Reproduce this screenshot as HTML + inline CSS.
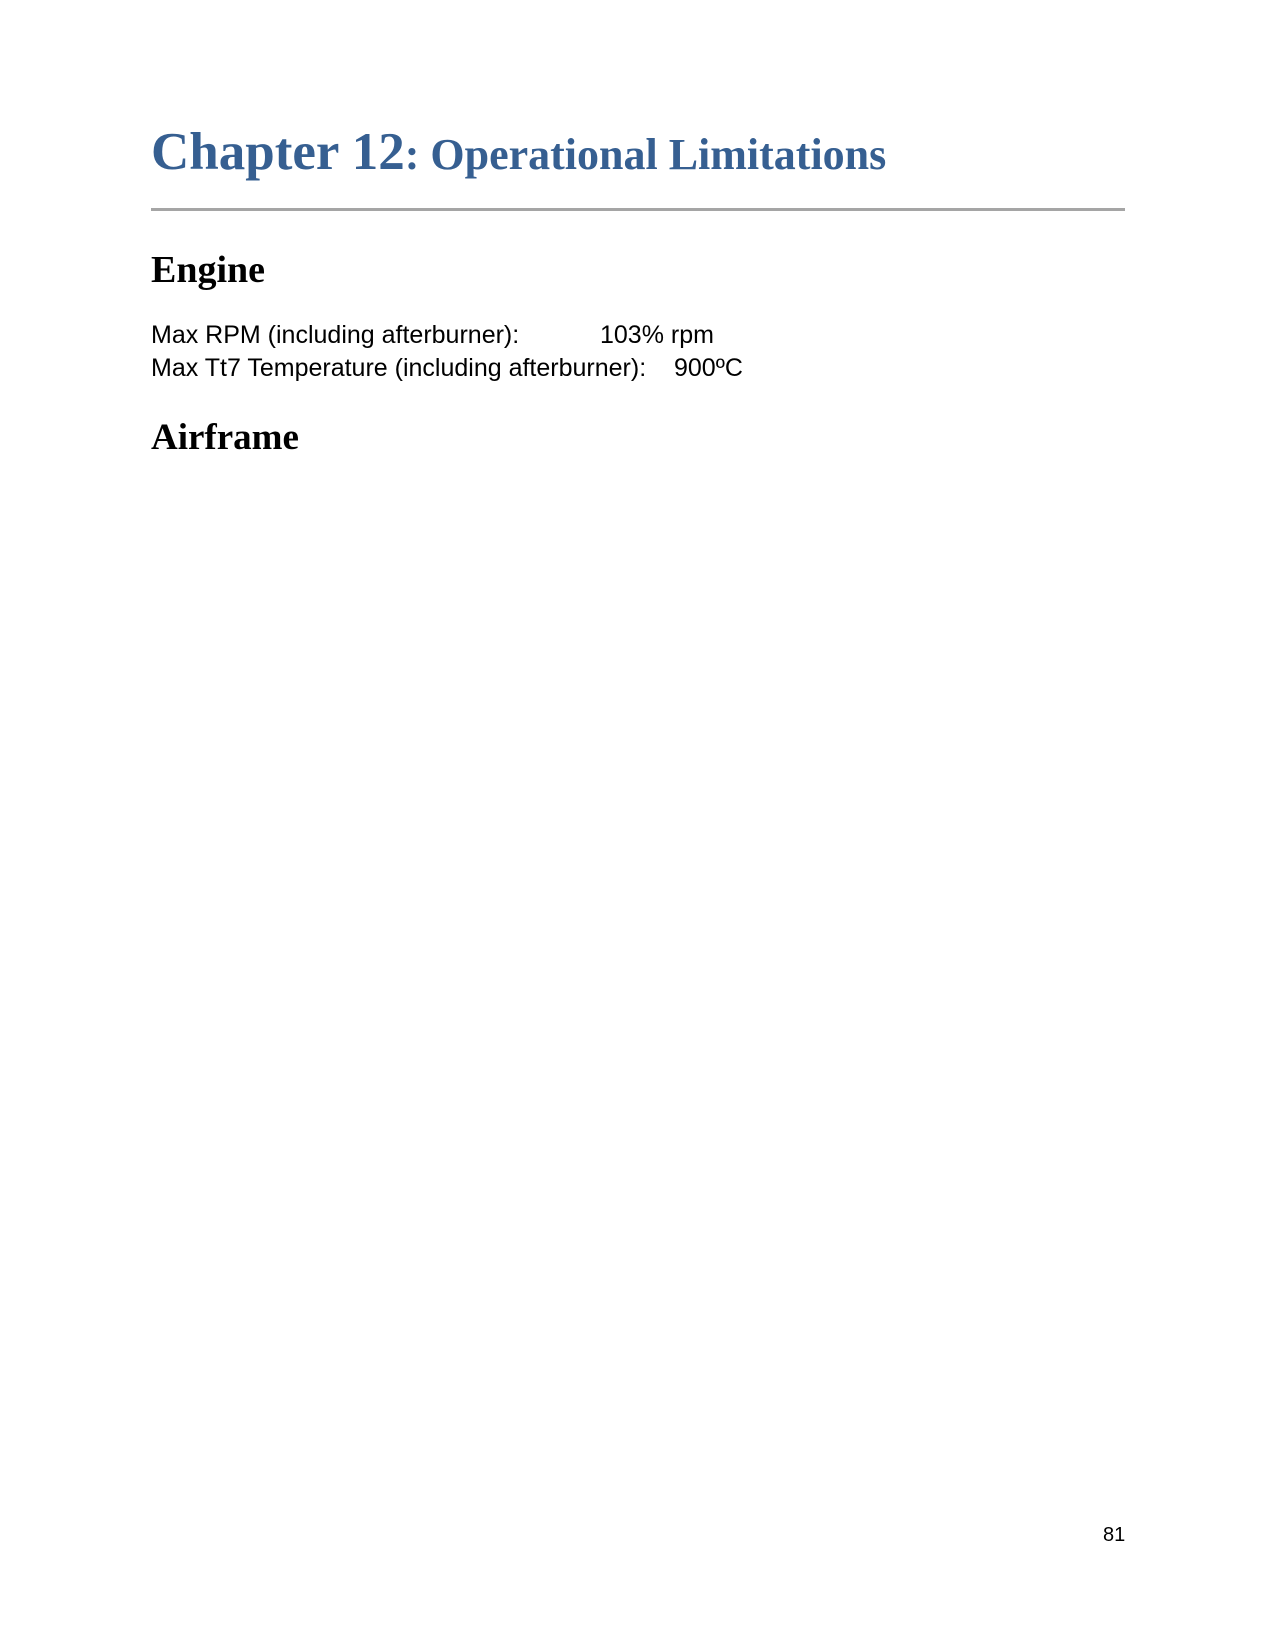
<!DOCTYPE html>
<html><head><style>
body{margin:0;width:1275px;height:1650px;background:#fff;position:relative;overflow:hidden}
div{position:absolute;white-space:nowrap}
.t{left:151px;top:122px;color:#365f91;font-family:"Liberation Serif",serif;font-weight:bold}
.h{font-family:"Liberation Serif",serif;font-weight:bold;font-size:38px;color:#000;left:151px}
.b{font-family:"Liberation Sans",sans-serif;font-size:25px;color:#000}
</style></head><body>
<div class="t"><span style="font-size:53px">Chapter 12</span><span style="font-size:44px">: Operational Limitations</span></div>
<div style="left:151px;top:208px;width:974px;height:3px;background:#a5a5a5"></div>
<div class="h" style="top:248px">Engine</div>
<div class="b" style="left:151px;top:321px">Max RPM (including afterburner):</div>
<div class="b" style="left:600px;top:321px">103% rpm</div>
<div class="b" style="left:151px;top:354px">Max Tt7 Temperature (including afterburner):</div>
<div class="b" style="left:674px;top:354px">900ºC</div>
<div class="h" style="top:416px;font-size:37px">Airframe</div>
<div style="left:1103px;top:1524px;font-family:'Liberation Sans',sans-serif;font-size:20px">81</div>
</body></html>
